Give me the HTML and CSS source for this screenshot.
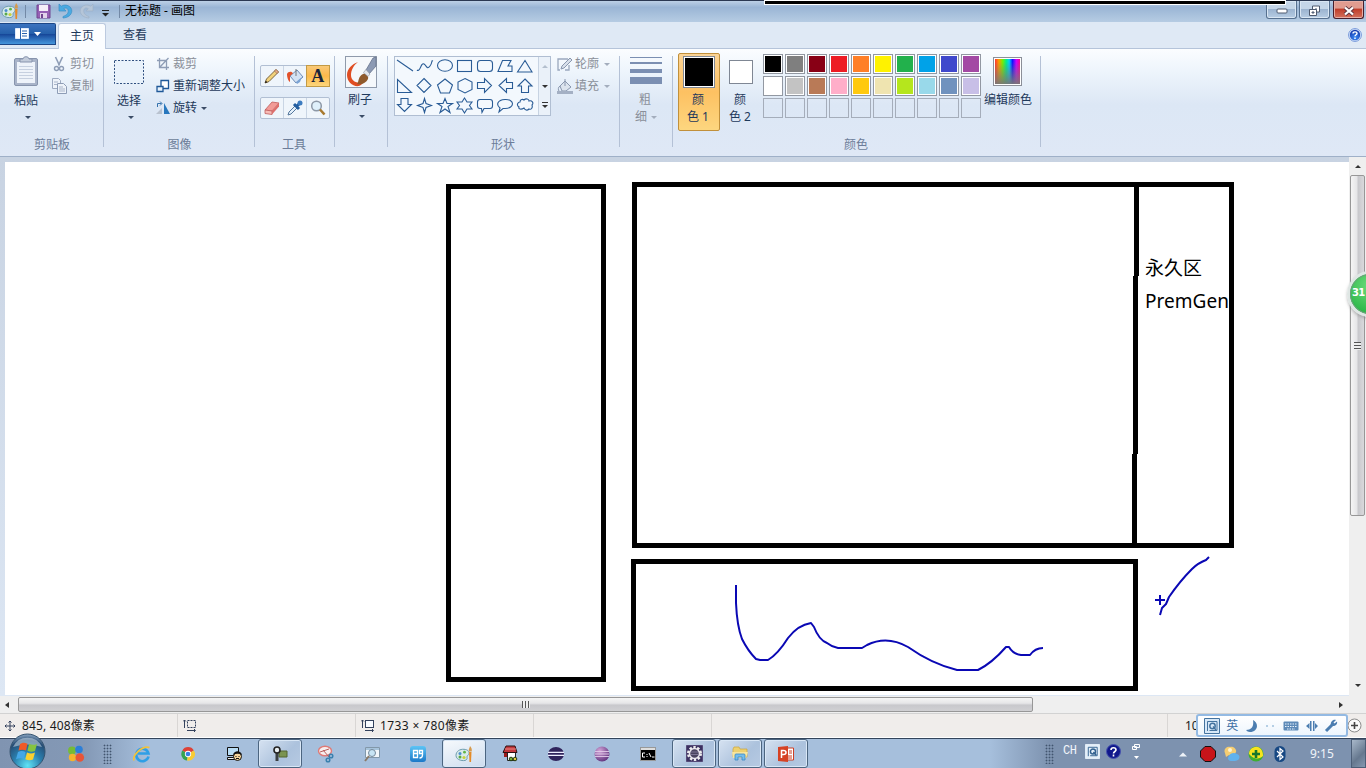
FILE: index.html
```html
<!DOCTYPE html>
<html lang="zh-CN">
<head>
<meta charset="utf-8">
<title>无标题 - 画图</title>
<link rel="stylesheet" href="styles.css">
</head>
<body>
<svg width="0" height="0" class="defs">
  <defs>
    <linearGradient id="blueG" x1="0" y1="0" x2="0" y2="1"><stop offset="0" stop-color="#5cc4f5"/><stop offset="1" stop-color="#1b78c8"/></linearGradient>
    <linearGradient id="rainbow"><stop offset="0" stop-color="#f33"/><stop offset=".15" stop-color="#f90"/><stop offset=".3" stop-color="#7e0"/><stop offset=".45" stop-color="#0e8"/><stop offset=".57" stop-color="#0cf"/><stop offset=".7" stop-color="#11f"/><stop offset=".85" stop-color="#c0f"/><stop offset="1" stop-color="#f08"/></linearGradient>
    <linearGradient id="fadeGray" x1="0" y1="0" x2="0" y2="1"><stop offset=".1" stop-color="#777" stop-opacity="0"/><stop offset="1" stop-color="#777" stop-opacity=".95"/></linearGradient>
    <radialGradient id="orb" cx=".5" cy=".9" r=".9"><stop offset="0" stop-color="#5fe3f5"/><stop offset=".45" stop-color="#2a7fae"/><stop offset=".8" stop-color="#274d75"/><stop offset="1" stop-color="#8fa9c4"/></radialGradient>
    <radialGradient id="ecl" cx=".35" cy=".3" r=".8"><stop offset="0" stop-color="#d3a5d8"/><stop offset="1" stop-color="#5a2b78"/></radialGradient>
    <radialGradient id="help" cx=".5" cy=".75" r=".7"><stop offset="0" stop-color="#3d8cf5"/><stop offset="1" stop-color="#1339ad"/></radialGradient>
    <symbol id="palette" viewBox="0 0 18 18">
      <path d="M1 10.500C1 6 5 4 9 4.300c3.500.2 5.500 2 5 4.200-.4 1.800-2 2-2 3.300s.5 2.200-1 3.200C9 16.400 1 15.500 1 10.500z" fill="#d9ebe9" stroke="#6d9cae"/>
      <circle cx="5" cy="8.500" r="1.500" fill="#4d8fd0"/><circle cx="9.500" cy="7.200" r="1.400" fill="#5fb446"/><circle cx="5" cy="12" r="1.500" fill="#58a848"/><circle cx="9" cy="12.500" r="1.600" fill="#c7d23c"/>
      <path d="M14 7h2.500l-.5 10h-1.500z" fill="#e58b27"/><path d="M13.700 6.500C13.500 4 14.700 3 15 1c1.500 1.500 2.200 3.500 1.700 5.500z" fill="#d69a4c"/>
    </symbol>
  </defs>
</svg>

<div class="window">
  <header class="titlebar">
    <svg class="app-ico" width="18" height="18"><use href="#palette"/></svg>
    <i class="tsep"></i>
    <svg class="save" width="15" height="15" viewBox="0 0 15 15"><path d="M1 1h13v13H1z" fill="#9560b4" stroke="#70458f"/><path d="M3 1h9v6H3z" fill="#f4eef8"/><path d="M4 9h7v5H4z" fill="#e2d4ea"/><path d="M5 10h2v4H5z" fill="#70458f"/></svg>
    <svg class="undo" width="15" height="16" viewBox="0 0 15 16"><path d="M1 1v7h7L5.700 5.700C8 4 10.500 5.500 10.300 8.500 10 11 8 12.500 5 13.500v1.500c5-.3 8.500-3 8.800-6.800C14 3.500 8 .2 3.300 3.200z" fill="#4aaae2" stroke="#3b8fc6" stroke-width=".7"/></svg>
    <svg class="redo" width="15" height="16" viewBox="0 0 15 16"><path d="M14 1v7H7l2.300-2.300C7 4 4.500 5.500 4.700 8.500 5 11 7 12.500 10 13.500v1.500C5 14.700 1.500 12 1.200 8.200 1 3.500 7 .2 11.700 3.200z" fill="#b5c5d8" stroke="#9fb1c7" stroke-width=".7"/></svg>
    <svg class="qat" width="7" height="7" viewBox="0 0 7 7"><path d="M0 .5h7" stroke="#222"/><path d="M0 3h7L3.500 6.500z" fill="#222"/></svg>
    <i class="tsep t2"></i>
    <h1 class="title">无标题 - 画图</h1>
    <div class="winbtns">
      <span class="wb"><svg width="12" height="6" viewBox="0 0 12 6"><rect x="1" y="1" width="10" height="4" rx="1" fill="#fff" stroke="#4f5b70"/></svg></span>
      <span class="wb"><svg width="13" height="12" viewBox="0 0 13 12"><path d="M4.500 1h7v6h-7z" fill="#fff" stroke="#4f5b70"/><path d="M7 3.500h2v1H7z" fill="#4f5b70"/><path d="M1.500 4.500h7v6h-7z" fill="#fff" stroke="#4f5b70"/><path d="M4 7h2v1H4z" fill="#9db4cf" stroke="#4f5b70"/></svg></span>
      <span class="wb close"><svg width="12" height="10" viewBox="0 0 12 10"><path d="M2 1.500l8 7M10 1.500l-8 7" stroke="#5d3640" stroke-width="4"/><path d="M2 1.500l8 7M10 1.500l-8 7" stroke="#fff" stroke-width="2.300"/></svg></span>
    </div>
    <div class="screenbar"></div>
  </header>

  <nav class="tabs">
    <button class="file"><svg width="27" height="12" viewBox="0 0 27 12"><path d="M.5.500h13v10H.5z" fill="#fff" stroke="#dfeafc"/><path d="M5.500 0v11M7 3h5M7 5.500h5M7 8h5" stroke="#2a62b0"/><path d="M19 4h7l-3.500 4z" fill="#fff"/></svg></button>
    <span class="tab on">主页</span><span class="tab">查看</span>
    <svg class="help" width="14" height="14" viewBox="0 0 14 14"><circle cx="7" cy="7" r="6.400" fill="#dceaff" stroke="#7496d8"/><circle cx="7" cy="7" r="5.200" fill="url(#help)"/><path d="M5 5.500C5 3.300 9 3.300 9 5.500 9 6.700 7 6.800 7 8.300M7 9.500v1.500" fill="none" stroke="#fff" stroke-width="1.400"/></svg>
  </nav>

  <section class="ribbon">
    <div class="group g-clip">
      <div class="body">
        <div class="big paste"><svg width="27" height="32" viewBox="0 0 27 32"><rect x="1.500" y="2.500" width="23" height="27" rx="1.500" fill="#a9b4c9" stroke="#8794ad"/><path d="M4 6h18v21H4z" fill="#eef3fa"/><path d="M6 10.500h14M6 13.500h14M6 16.500h14M6 19.500h14M6 22.500h14" stroke="#c6d0e0"/><path d="M7 6V3h3c0-3 6-3 6 0h3v3z" fill="#c3ccdb" stroke="#8794ad"/></svg><span>粘贴</span><i class="arr"></i></div>
        <div class="rows">
          <div class="row dim"><svg width="16" height="16" viewBox="0 0 16 16"><path d="M4.500 1l4 8.500M11.500 1l-4 8.500" stroke="#8e9db6" stroke-width="1.600"/><circle cx="5.500" cy="12.500" r="2" fill="none" stroke="#8e9db6" stroke-width="1.400"/><circle cx="10.500" cy="12.500" r="2" fill="none" stroke="#8e9db6" stroke-width="1.400"/></svg><span>剪切</span></div>
          <div class="row dim"><svg width="16" height="16" viewBox="0 0 16 16"><path d="M1.500.500h6l2 2v8h-8z" fill="#eef3fa" stroke="#9eabc1"/><path d="M6.500 5.500h6l3 3v7h-9z" fill="#eef3fa" stroke="#8e9db6"/><path d="M3 4h4M3 6.500h3M8 9h4M8 11h6M8 13h6" stroke="#a9b5c9"/></svg><span>复制</span></div>
        </div>
      </div>
      <div class="label">剪贴板</div>
    </div>

    <div class="group g-image">
      <div class="body">
        <div class="big select"><svg width="31" height="32" viewBox="0 0 31 32"><rect x=".5" y="4.500" width="29" height="23" fill="#e9f2fb" stroke="#2f4f7f" stroke-dasharray="2 1.500"/></svg><span>选择</span><i class="arr"></i></div>
        <div class="rows">
          <div class="row dim"><svg width="14" height="14" viewBox="0 0 14 14"><path d="M1 3.500h9.500V13M3.500 1v9.500H13M3.500 10.500L12.500 1" fill="none" stroke="#8e9db6" stroke-width="1.300"/></svg><span>裁剪</span></div>
          <div class="row"><svg width="14" height="14" viewBox="0 0 14 14"><path d="M5 1.500h7.500v8H5z" fill="#fff" stroke="#1f5898" stroke-width="1.300"/><path d="M1 7.500h6v5H1z" fill="#e8f3fd" stroke="#1f5898" stroke-width="1.300"/></svg><span>重新调整大小</span></div>
          <div class="row"><svg width="14" height="14" viewBox="0 0 14 14"><path d="M0 13h6V7z" fill="#b9c2cf"/><path d="M8 13h6L8 2z" fill="#2877bd"/><path d="M1.500 6V2.500h4M4 .5l2 2-2 2" fill="none" stroke="#3572ad"/></svg><span>旋转</span><i class="arr"></i></div>
        </div>
      </div>
      <div class="label">图像</div>
    </div>

    <div class="group g-tools">
      <div class="body">
        <div class="toolrow">
          <span><svg width="16" height="16" viewBox="0 0 16 16"><path d="M1 15l1.500-4L12 1.500l2.500 2.500L5 13.500z" fill="#f2d27a" stroke="#7a6540"/><path d="M12 1.500l2.500 2.500-1.500 1.500L10.500 3z" fill="#ecaf89" stroke="#8c5e4b" stroke-width=".6"/><path d="M1 15l.8-2.300 1.700 1.600z" fill="#111"/></svg></span>
          <span><svg width="18" height="17" viewBox="0 0 18 17"><path d="M4 8l7-6 6 7-7 6z" fill="#d3e2f4" stroke="#6d8cb6"/><path d="M10 1v7" stroke="#777"/><path d="M1 6c1-3 5-3 6-.8L4 8v6c-2-1-3-5-3-8z" fill="#e2512b"/><path d="M10 14l6-5-2 5-3 2z" fill="#7ba3d4"/></svg></span>
          <span class="on">A</span>
        </div>
        <div class="toolrow">
          <span><svg width="16" height="14" viewBox="0 0 16 14"><path d="M1 9l7-8 7 1-7 8z" fill="#f29b97" stroke="#c05d5d" stroke-width=".8"/><path d="M1 9l7 1v3.500l-7-1z" fill="#f7bbb5" stroke="#c05d5d" stroke-width=".8"/><path d="M8 10l7-8v3.500l-7 8z" fill="#dc6f6c"/></svg></span>
          <span><svg width="16" height="16" viewBox="0 0 16 16"><path d="M1 15l1-3 6-6 2 2-6 6z" fill="#e4f0fb" stroke="#55779c"/><path d="M7 4l5 5M9.500 6.500l4-4" stroke="#225d9f" stroke-width="3"/><circle cx="13" cy="3" r="2.500" fill="#3d7cc0"/></svg></span>
          <span><svg width="16" height="16" viewBox="0 0 16 16"><circle cx="6.500" cy="6" r="4.800" fill="#dff0fb" stroke="#8d98a7" stroke-width="1.500"/><path d="M10 9.500l4.500 5" stroke="#a8792e" stroke-width="2.600"/></svg></span>
        </div>
      </div>
      <div class="label">工具</div>
    </div>

    <div class="group g-brush">
      <div class="body">
        <div class="big"><svg width="32" height="32" viewBox="0 0 32 32"><rect x=".5" y=".5" width="31" height="31" fill="#f5f8fb" stroke="#8f9aab"/><path d="M13 6C7 8 2 13 2 19c0 7 6 12 12 11 3-1 4-3 3-4-5 2-11-1-11-7 0-5 3-10 7-13z" fill="#df4d22"/><path d="M12 28c2-2 1-8 6-10 3-1 6 2 5 5-2 4-6 6-11 5z" fill="#8f5a2c"/><path d="M21 14l7-12 3-1v9l-7 8z" fill="#8c9ab4" stroke="#65718b" stroke-width=".8"/><path d="M18.500 16.500l2.500-3 4 4.500-2 2.500z" fill="#e3e6ec" stroke="#8a8f99" stroke-width=".6"/></svg><span>刷子</span><i class="arr"></i></div>
      </div>
    </div>

    <div class="group g-shapes">
      <div class="body">
        <div class="gallery">
          <svg width="143" height="58" viewBox="395 57 143 58" fill="none" stroke="#2a5c96" stroke-width="1.100">
            <path d="M397 60l16 11M417 70c3 3 4-8 7-6s3 6 6 2 1-6 3-5"/>
            <ellipse cx="445" cy="65.500" rx="7.500" ry="5.800"/><rect x="457.500" y="60.500" width="14" height="11"/><rect x="477.500" y="60.500" width="15" height="11" rx="3"/>
            <path d="M502.500 60.500h8.500l-3 5.500h4v5.500h-14zM525 60.500l7 11.500h-14.500zM397.500 79.500v13h14zM424 78.500l7 7-7 7-7-7zM445 79l7.500 6-3 8h-9l-3-8zM465 78.500l7 3.500v7.500l-7 3.500-7-3.500v-7.500zM477.500 82.500h7v-4l7 7-7 7v-4h-7zM512.500 82.500h-6v-4l-7.500 7 7.500 7v-4h6zM525 79l7 7h-3.500v6.500h-7V86H518zM401 98.500h7v6h3.500l-7 7-7-7h3.500zM424.500 98.500l1.500 5 5.500 2-5.500 2-1.500 5-1.500-5-5.500-2 5.500-2zM445 98.500l2 5h5.500l-4.500 3 2 6-5-3.500-5 3.500 2-6-4.500-3h5.500zM464.500 98l2.500 4h5l-2.500 3.500 2.500 3.500h-5l-2.500 4-2.500-4h-5l2.500-3.500-2.500-3.500h5z"/>
            <path d="M480 99.500h10q2.500 0 2.500 2.500v4q0 2.500-2.500 2.500h-6l-2 4-.5-4H480q-2.500 0-2.500-2.500v-4q0-2.500 2.500-2.500zM500 108c-4-3-3-8 5-8.500 10-.5 10 9 0 9h-2l-4 3.500zM519 107c-3-2-1-5 1-5 0-3 3-3 4-2 2-2 5-1 5 1 3-1 5 2 3 4 1 3-1 5-3 4-2 2-4 1-5-1-3 2-6 1-5-1z"/>
          </svg>
          <div class="gscroll"><i class="up dim"></i><i class="dn"></i><i class="dn more"></i></div>
        </div>
        <div class="rows">
          <div class="row dim"><svg width="16" height="16" viewBox="0 0 16 16"><path d="M11 3H1v11h2M12 9v5H8" fill="none" stroke="#9aa8be" stroke-width="1.300"/><path d="M4 13l1-3 8-8 2 2-8 8z" fill="#d8e0eb" stroke="#8997ae"/></svg><span>轮廓</span><i class="arr"></i></div>
          <div class="row dim"><svg width="16" height="16" viewBox="0 0 16 16"><path d="M3 8l5-5 6 6-5 4H5z" fill="#dce4ee" stroke="#8997ae"/><path d="M8 1v7M3 8c-2 1-2 4-1 5" fill="none" stroke="#8997ae"/><path d="M0 13h16v3H0z" fill="#a4b0c4"/></svg><span>填充</span><i class="arr"></i></div>
        </div>
      </div>
      <div class="label">形状</div>
    </div>

    <div class="group g-size">
      <div class="body">
        <div class="big dim"><svg width="32" height="32" viewBox="0 0 32 32" fill="#7b8fb2"><path d="M0 1h32v1H0zM0 6h32v2H0zM0 13h32v4H0zM0 21h32v7H0z"/></svg><span>粗</span><span class="l2">细 <i class="arr"></i></span></div>
      </div>
    </div>

    <div class="group g-colors">
      <div class="body">
        <div class="cbtn on"><i class="sw s1"></i><span>颜</span><span>色 1</span></div>
        <div class="cbtn"><i class="sw s2"></i><span>颜</span><span>色 2</span></div>
        <div class="palette">
          <i class="c k1"></i><i class="c k2"></i><i class="c k3"></i><i class="c k4"></i><i class="c k5"></i><i class="c k6"></i><i class="c k7"></i><i class="c k8"></i><i class="c k9"></i><i class="c k10"></i>
          <i class="c k11"></i><i class="c k12"></i><i class="c k13"></i><i class="c k14"></i><i class="c k15"></i><i class="c k16"></i><i class="c k17"></i><i class="c k18"></i><i class="c k19"></i><i class="c k20"></i>
          <i class="c e"></i><i class="c e"></i><i class="c e"></i><i class="c e"></i><i class="c e"></i><i class="c e"></i><i class="c e"></i><i class="c e"></i><i class="c e"></i><i class="c e"></i>
        </div>
        <div class="big edit"><svg width="30" height="32" viewBox="0 0 30 32"><rect x=".5" y="1.500" width="28" height="28" fill="#fff" stroke="#8b8f98"/><path d="M2 3h25v25H2z" fill="url(#rainbow)"/><path d="M2 3h25v25H2z" fill="url(#fadeGray)"/></svg><span>编辑颜色</span></div>
      </div>
      <div class="label">颜色</div>
    </div>
  </section>

  <main class="work">
    <div class="desk">
      <svg class="canvas" width="1344" height="533" viewBox="5 162 1344 533">
        <g fill="none" stroke="#000" stroke-width="5">
          <rect x="448.500" y="186.500" width="155" height="493"/>
          <rect x="634.500" y="184.500" width="597" height="361"/>
          <rect x="633.500" y="561.500" width="502" height="127"/>
          <path d="M1136.500 184v92M1135.500 276v178M1134.500 454v92"/>
        </g>
        <text x="1145" y="275" textLength="57" class="ink">永久区</text>
        <text x="1145" y="308" textLength="84" class="ink">PremGen</text>
        <g fill="none" stroke="#0a08b4" stroke-width="2" stroke-linejoin="round">
          <path d="M736 585V603Q737 626 742 639 748 651 756 659L760 660H768Q778 654 788 638 798 625 811 623L814 627Q819 640 827 643 832 647 838 648H862L867 645Q887 635 908 647 932 664 957 670H978Q992 663 1006 647L1009 647Q1013 654 1021 655H1030Q1035 648 1043 648"/>
          <path d="M1209 557L1206 560Q1198 563 1192 569 1180 581 1169 597L1166 604 1162 608 1160 615M1155 600h10M1160 595v10"/>
        </g>
      </svg>
    </div>
    <div class="vscroll"><i class="up"></i><div class="vthumb"><b></b></div><i class="dn"></i></div>
    <div class="ball">31</div>
  </main>
  <div class="hscroll"><i class="lt"></i><div class="hthumb"><b></b></div><i class="rt"></i></div>

  <footer class="status">
    <div class="cell c1"><svg width="12" height="12" viewBox="0 0 12 12"><path d="M6 1v10M1 6h10M4.500 2.500L6 1l1.500 1.500M4.500 9.500L6 11l1.500-1.500M2.500 4.500L1 6l1.500 1.500M9.500 4.500L11 6 9.500 7.500" fill="none" stroke="#33415c"/></svg><span class="pos">845, 408像素</span></div>
    <div class="cell"><svg width="14" height="13" viewBox="0 0 14 13"><rect x="4.500" y="1.500" width="8" height="7" fill="none" stroke="#33415c" stroke-dasharray="2 1"/><path d="M1.500 1v8M0 2.500L1.500 1 3 2.500M4 11.500h8M11 10l1.500 1.500L11 13" fill="none" stroke="#33415c"/></svg></div>
    <div class="cell"><svg width="14" height="13" viewBox="0 0 14 13"><rect x="4.500" y="1.500" width="8" height="7" fill="#f8fbff" stroke="#33415c"/><path d="M1.500 1v8M0 2.500L1.500 1 3 2.500M4 11.500h8M11 10l1.500 1.500L11 13" fill="none" stroke="#33415c"/></svg><span class="dims">1733 × 780像素</span></div>
    <div class="cell"></div><div class="cell wide"></div>
    <div class="zoom"><span>100%</span><svg width="15" height="15" viewBox="0 0 15 15"><circle cx="7.500" cy="7.500" r="6.500" fill="#fafafa" stroke="#8b8b8b"/><path d="M7.500 4v7M4 7.500h7" stroke="#444" stroke-width="1.600"/></svg></div>
    <div class="ime">
      <svg width="16" height="16" viewBox="0 0 16 16" fill="none" stroke="#44739f"><path d="M.5.500h15v15H.5z" fill="#d7e8f8"/><path d="M3.500 13V3.500H13v9H5.500"/><circle cx="8.500" cy="8" r="2.700" stroke-width="1.500"/><path d="M9 8.500l3 3.500" stroke-width="1.500"/></svg>
      <span>英</span>
      <svg width="14" height="14" viewBox="0 0 14 14"><path d="M8 1c7 4 4 12-3 12-2 0-3-1-4-2 6 0 8-4 7-10z" fill="#4b7db0"/></svg>
      <svg width="12" height="4" viewBox="0 0 12 4"><circle cx="2" cy="2" r="1" fill="#9fc0dd"/><circle cx="8" cy="2" r="1" fill="#9fc0dd"/></svg>
      <svg width="16" height="12" viewBox="0 0 16 12"><rect x=".5" y="1.500" width="15" height="9" rx="1" fill="#5d8ab8"/><path d="M2 4h12M2 6.500h12M4 9h8" stroke="#e9f3fc" stroke-dasharray="1.500 1"/></svg>
      <svg width="12" height="12" viewBox="0 0 12 12" fill="#4b7db0"><path d="M4 1h1.500v10H4zM7 1h1.500v10H7zM3.500 3v6L0 6zM9 3v6l3-3z"/></svg>
      <svg width="14" height="14" viewBox="0 0 14 14"><path d="M2 12l6-6" stroke="#4b7db0" stroke-width="3"/><path d="M12 1L9.500 3.500l1 1L13 2.500C14 6 10 8 7 6.500 6 3 9 0 12 1z" fill="#4b7db0"/></svg>
    </div>
  </footer>

  <div class="taskbar">
    <div class="start"><svg width="37" height="37" viewBox="0 0 37 37"><circle cx="18.500" cy="18.500" r="17.500" fill="url(#orb)" stroke="#34536f"/><path d="M4 14a16 16 0 0 1 29 0Q18 9 4 14z" fill="#dbe8f2" opacity=".5"/><path d="M11 11c3-2 5-1.500 7.500-.3L17 17.500c-2.500-1-4.500-1.200-7.500 0z" fill="#ef5a28"/><path d="M20 11c3 1 5 1.200 8 0l-2 7c-3 1-5 .8-7.500-.3z" fill="#86c440"/><path d="M9 19c3-1.500 5-1 7.500 0L15 26c-2.500-1.200-5-1-8 .3z" fill="#45a7e6"/><path d="M18 19.500c3 1.200 5 1.200 8 0l-2 7c-3 1.200-5 .8-7.700-.3z" fill="#fbd02f"/></svg></div>
    <div class="tb pin"><svg width="18" height="18" viewBox="0 0 18 18"><circle cx="5" cy="5.500" r="3.900" fill="#76bb36"/><circle cx="12" cy="4.500" r="3.800" fill="#2c7fd8"/><circle cx="5.500" cy="12.500" r="3.700" fill="#f5b42c"/><circle cx="12.800" cy="12.500" r="4.300" fill="#e85438"/></svg></div>
    <i class="grip"></i>
    <div class="tasks">
      <div class="tb"><svg width="18" height="18" viewBox="0 0 18 18"><path d="M15.500 11.500A6.200 6.200 0 1 1 15.500 8.500H5" fill="none" stroke="#2f9fe6" stroke-width="2.600"/><path d="M1 15.500C-1 10 10 0 16.500 2.500" fill="none" stroke="#f2c23b" stroke-width="1.700"/></svg></div>
      <div class="tb"><svg width="14" height="14" viewBox="0 0 16 16"><path d="M8 8L1.500 4A7.500 7.500 0 0 1 14.700 4z" fill="#dd4237"/><path d="M8 8L1.500 4A7.500 7.500 0 0 0 7 15.500z" fill="#35a350"/><path d="M8 8l6.700-4A7.500 7.500 0 0 1 7 15.500z" fill="#f7cb35"/><circle cx="8" cy="8" r="3.600" fill="#fff"/><circle cx="8" cy="8" r="2.700" fill="#397fe2"/></svg></div>
      <div class="tb"><svg width="17" height="16" viewBox="0 0 17 16"><path d="M1.500 1.500h11v8h-11z" fill="#b8dcf5" stroke="#111"/><path d="M1.500 11.500h7v2h-7z" fill="#eee" stroke="#111"/><circle cx="11.500" cy="10.500" r="4" fill="#f6d49a" stroke="#111"/><path d="M7 9c1-5 8-5 9 0l-3-1.200-3 0z" fill="#111"/><path d="M10 10v1M13 10v1M10 12.500h3" stroke="#111"/></svg></div>
      <div class="tb run"><svg width="18" height="16" viewBox="0 0 18 16"><path d="M8 5h8v6H8z" fill="#7a9350" stroke="#53652f"/><path d="M4.500 6h3v9h-3z" fill="#3b3f42"/><circle cx="6" cy="4" r="3" fill="#e8eef1" stroke="#222" stroke-width="1.600"/></svg></div>
      <div class="tb"><svg width="18" height="18" viewBox="0 0 18 18"><ellipse cx="8" cy="6" rx="6.500" ry="4.700" fill="#f8eeee" stroke="#df7a76" stroke-width="1.400"/><path d="M3 7l9-3M6 5l6 7" stroke="#b9605e"/><circle cx="14" cy="11" r="1.800" fill="none" stroke="#3980ae" stroke-width="1.500"/><circle cx="11" cy="15" r="1.800" fill="none" stroke="#3980ae" stroke-width="1.500"/></svg></div>
      <div class="tb"><svg width="18" height="18" viewBox="0 0 18 18"><path d="M2.500 2.500h14v10h-14z" fill="#f1f6fa" stroke="#8298aa"/><path d="M3 3h13v2H3z" fill="#a7c4dc"/><circle cx="9" cy="8" r="3.500" fill="#c7e4f4" stroke="#75899a"/><path d="M6 11l-4 5" stroke="#8a7a68" stroke-width="2"/></svg></div>
      <div class="tb"><svg width="16" height="16" viewBox="0 0 16 16"><rect width="16" height="16" rx="3" fill="url(#blueG)"/><path d="M3.500 4.500h4v3h-4zM3.500 7.500h4v4h-4zM9.500 4.500h3v3h-3zM12.500 4v5q0 3-3 3" fill="none" stroke="#fff" stroke-width="1.300"/></svg></div>
      <div class="tb run cur"><svg width="18" height="18"><use href="#palette"/></svg></div>
      <div class="tb"><svg width="16" height="17" viewBox="0 0 16 17"><path d="M5.500 7.500h8v8h-8z" fill="#fff" stroke="#222"/><path d="M4 1h9l2 6.500H1z" fill="#c4383d" stroke="#2a1111"/><path d="M3 4h11" stroke="#e98a86"/><path d="M2 8h3v4H2z" fill="#9b1b1b"/><circle cx="9" cy="14" r="1.800" fill="#70ad34" stroke="#243b13"/><circle cx="13" cy="14" r="1.800" fill="#e3c93a" stroke="#243b13"/></svg></div>
      <div class="tb"><svg width="18" height="16" viewBox="0 0 18 16"><ellipse cx="9" cy="8" rx="8" ry="7" fill="#30245c"/><path d="M1 6.300h16M1 9.300h16" stroke="#eef" stroke-width="1.300"/></svg></div>
      <div class="tb"><svg width="18" height="16" viewBox="0 0 18 16"><circle cx="9" cy="8" r="7.500" fill="url(#ecl)"/><path d="M2 5.500h14M2 8h14M2 10.500h14" stroke="#e2cbe9" stroke-width=".9"/></svg></div>
      <div class="tb"><svg width="16" height="14" viewBox="0 0 16 14"><path d="M.5.500h15v13H.5z" fill="#000" stroke="#999"/><path d="M1 1h14v2H1z" fill="#ddd"/><path d="M5 6H2.500v4H5M7 7v1M7 9v1M9 6l2 4M12 10h2.500" fill="none" stroke="#fff"/></svg></div>
      <div class="tb run"><svg width="17" height="17" viewBox="0 0 17 17"><path d="M.5.500h16v16H.5z" fill="#3b3060" stroke="#554a78"/><circle cx="8.500" cy="8.500" r="6" fill="none" stroke="#eee" stroke-width="3" stroke-dasharray="2.300 1.470"/><circle cx="8.500" cy="8.500" r="5" fill="#4a4460" stroke="#e9e6ee" stroke-width="1.500"/><path d="M5 7h7M5 9.500h7" stroke="#7d7594"/></svg></div>
      <div class="tb run"><svg width="18" height="16" viewBox="0 0 18 16"><path d="M2 3l1-2h5l1 2h7v8H2z" fill="#edd170" stroke="#cba43a" stroke-width=".7"/><path d="M1 6h16l-2 6H2z" fill="#f8e59e"/><path d="M4 14V9q0-1 1-1h8q1 0 1 1v5h-3v-3H7v3z" fill="#75bdec" stroke="#3988c5" stroke-width=".8"/></svg></div>
      <div class="tb run"><svg width="16" height="16" viewBox="0 0 16 16"><path d="M7 2h8.500v12H7z" fill="#fff" stroke="#ce3e25"/><path d="M11 5h3M11 7h3M10 10h4M10 12h4" stroke="#ce3e25"/><path d="M0 1l10-1v16L0 15z" fill="#d64224"/><path d="M3.500 12V4.500h2q2.500 0 2.500 2t-2.500 2h-2" fill="none" stroke="#fff" stroke-width="1.500"/></svg></div>
    </div>
    <i class="grip g2"></i>
    <div class="tray">
      <span class="ch">CH</span>
      <svg class="q" width="15" height="15" viewBox="0 0 16 16" fill="none" stroke="#31618f"><path d="M.5.500h15v15H.5z" fill="#e4eff9" stroke="#e4eff9"/><path d="M3.500 13V3.500H13v9H5.500"/><circle cx="8.500" cy="8" r="2.700" stroke-width="1.500"/><path d="M9 8.500l3 3.500" stroke-width="1.500"/></svg>
      <svg class="hp" width="15" height="15" viewBox="0 0 15 15"><circle cx="7.500" cy="7.500" r="7" fill="#10188c" stroke="#4653ae"/><path d="M5 6C5 3 10 3 10 6 10 7.500 7.500 7.500 7.500 9.500M7.500 10.500v2" fill="none" stroke="#fff" stroke-width="1.600"/></svg>
      <svg class="rs" width="9" height="18" viewBox="0 0 9 18"><path d="M2.500 1.500h5v3h-5zM.5 3.500h4v3h-4z" fill="#8296b2" stroke="#fff"/><path d="M2 13h5L4.500 16z" fill="#fff"/></svg>
      <svg class="ua" width="8" height="5" viewBox="0 0 8 5"><path d="M0 4.500h8L4 .5z" fill="#eef3f8"/></svg>
      <svg width="16" height="16" viewBox="0 0 16 16"><path d="M5 .5h6L15.500 5v6L11 15.500H5L.5 11V5z" fill="#c8141a" stroke="#111"/></svg>
      <svg width="16" height="16" viewBox="0 0 16 16"><path d="M1 7C-1 3 3 0 6 1c3-1 7 2 6 5s-5 4-7 3l-3 2z" fill="#f4cd72"/><path d="M5 10c1-3 5-4 8-2 4 1 3 7-2 7H7c-3 0-4-3-2-5z" fill="#61b2ed"/><circle cx="6" cy="4" r="2" fill="#fff4d0"/></svg>
      <svg width="16" height="16" viewBox="0 0 16 16"><circle cx="8" cy="8" r="7.500" fill="#3fae31"/><path d="M1 8a7 7 0 0 1 12-5c2 3 2 5 2 7-3 3-9 4-14-2z" fill="#f7e31f"/><path d="M8 4v8M4 8h8" stroke="#16782c" stroke-width="2.600"/></svg>
      <svg width="16" height="16" viewBox="0 0 16 16"><rect x="2.500" y="0" width="11" height="16" rx="5.500" fill="#174883"/><path d="M5 5l6 6-3 2.500v-11L11 5l-6 6" fill="none" stroke="#fff" stroke-width="1.200"/></svg>
      <span class="clock">9:15</span>
      <i class="show"></i>
    </div>
  </div>
</div>
</body>
</html>
```
FILE: styles.css
```css
* { box-sizing: border-box; }
body { margin: 0; overflow: hidden; font: 12px/16px "Noto Sans", "Noto Sans CJK SC", sans-serif; color: #1e395b; }
i { font-style: normal; display: block; flex: none; }
svg { display: block; flex: none; }
.defs { position: absolute; }
.window { width: 1366px; height: 768px; display: flex; flex-direction: column; overflow: hidden; background: #dfe9f5; }

/* title bar */
.titlebar { position: relative; height: 22px; flex: none; display: flex; align-items: center; padding-bottom: 1px; border-top: 1px solid #2b3852; background: linear-gradient(#bdd0e6, #9ab5d5 30%, #b6cce3); }
.app-ico { margin-left: 1px; }
.tsep { width: 1px; height: 13px; background: #7389a6; margin-left: 6px; }
.save { margin-left: 10px; }
.undo { margin-left: 7px; }
.redo { margin-left: 6px; }
.qat { margin: 5px 0 0 8px; }
.tsep.t2 { margin-left: 10px; }
.title { margin: 0 0 0 5px; font-size: 12px; font-weight: 400; color: #000; line-height: 16px; }
.winbtns { margin-left: auto; display: flex; gap: 2px; padding-right: 2px; align-self: flex-start; }
.wb { width: 31px; height: 18px; padding-top: 2px; border: 1px solid #56708f; border-top: 0; border-radius: 0 0 3px 3px; box-shadow: inset 0 0 0 1px #d9e6f3; background: linear-gradient(#c5d6e8 45%, #9cb4d0 50%, #b7cde4); display: flex; align-items: center; justify-content: center; }
.wb.close { border-color: #471e2b; box-shadow: inset 0 0 0 1px #e6ada5; background: linear-gradient(#e09c90 40%, #c03f2c 50%, #d4715c); margin-left: 1px; }
.screenbar { position: absolute; left: 764px; top: -1px; width: 522px; height: 5px; background: #000; border: 1px solid #fff; }

/* tabs */
.tabs { height: 27px; flex: none; display: flex; align-items: flex-start; background: #dfe9f5; border-bottom: 1px solid #b5c4da; }
.file { margin: 1px 2px 0 0; width: 56px; height: 22px; padding: 0 0 0 15px; border: 1px solid #1c4787; border-left: 0; border-radius: 0 2px 0 0; background: linear-gradient(#3b73bf, #2560ab 48%, #17489a 52%, #4596dc); }
.tab { height: 27px; width: 53px; padding-top: 5px; text-align: center; }
.tab.on { width: 48px; margin-top: 1px; height: 26px; padding-top: 4px; background: #fbfdff; border: 1px solid #bccadf; border-bottom: 0; border-radius: 3px 3px 0 0; }
.tab.on + .tab { width: 58px; }
.help { margin: 6px 4px 0 auto; }

/* ribbon */
.ribbon { height: 108px; flex: none; display: flex; border-bottom: 1px solid #9fb0c8; background: linear-gradient(#fbfdff, #eef5fc 20%, #dce7f5 52%, #dfe8f6); }
.group { position: relative; height: 107px; display: flex; flex-direction: column; background: linear-gradient(#b4c1d6, #b4c1d6) right 7px / 1px 91px no-repeat; }
.body { height: 88px; display: flex; padding-top: 7px; }
.label { text-align: center; color: #6c7d99; line-height: 16px; }
.g-tools .label, .g-shapes .label, .g-colors .label { padding-right: 2px; }
.big { display: flex; flex-direction: column; align-items: center; }
.big > span { margin-top: 5px; white-space: nowrap; }
.big > .arr { margin: 7px 0 0 3px; }
.big > .l2 { margin-top: 1px; display: flex; gap: 4px; align-items: center; }
.arr { width: 0; height: 0; border: 3px solid transparent; border-top-color: #3b4c66; border-bottom: 0; }
.dim { color: #8a8f99; }
.dim .arr { border-top-color: #a3adbd; }
.rows { display: flex; flex-direction: column; gap: 6px; }
.row { display: flex; align-items: center; gap: 3px; height: 16px; white-space: nowrap; }
.g-clip { width: 104px; } .g-image { width: 151px; } .g-tools { width: 80px; } .g-brush { width: 53px; } .g-shapes { width: 232px; } .g-size { width: 53px; } .g-colors { width: 368px; }
.g-clip .big { width: 52px; }
.g-clip .rows { margin-left: -1px; }
.g-image .big { width: 50px; }
.g-image .rows { margin-left: 2px; }
.g-image .row .arr { margin-left: 1px; }
.g-tools .body { flex-direction: column; gap: 10px; padding: 16px 0 0 5px; }
.toolrow { width: 70px; height: 22px; display: flex; border: 1px solid #b1bfd3; border-radius: 2px; background: #eff5fb; }
.toolrow span { flex: 1; display: flex; align-items: center; justify-content: center; border-left: 1px solid #c9d5e4; }
.toolrow span:first-child { border: 0; }
.toolrow .on { margin: -1px; border: 1px solid #c29a45; background: linear-gradient(#f9c978, #fbb94a 50%, #fdd67c); font: bold 18px/20px "Liberation Serif", serif; color: #17233b; }
.g-brush .big { width: 52px; }
.g-brush .big > span { margin: 4px 2px 0 0; }
.g-brush .big > .arr { margin-left: 2px; }
.g-shapes .body { padding-left: 6px; }
.gallery { width: 157px; height: 60px; display: flex; border: 1px solid #b0bed2; background: #f3f8fd; }
.gscroll { width: 12px; display: flex; flex-direction: column; align-items: center; border-left: 1px solid #c7d3e2; padding-top: 8px; gap: 17px; background: #eaf1f9; }
.up, .dn, .lt, .rt { width: 0; height: 0; border: 3px solid transparent; }
.up { border-bottom: 3px solid #333; border-top: 0; }
.dn { border-top: 3px solid #333; border-bottom: 0; }
.up.dim { border-bottom-color: #b3bfce; }
.dn.more { position: relative; }
.dn.more::before { content: ""; position: absolute; left: -3px; top: -6px; width: 6px; height: 1px; background: #333; }
.g-shapes .rows { margin-left: 6px; }
.g-shapes .row { gap: 2px; }
.g-shapes .row .arr { margin-left: 3px; }
.g-size .big { width: 52px; }
.g-size .big > span { margin: 4px 2px 0 0; }
.g-size .big > .l2 { margin: 1px 0 0; }
.g-colors .body { padding: 4px 0 0 5px; }
.cbtn { width: 42px; height: 78px; display: flex; flex-direction: column; align-items: center; color: #1e395b; }
.cbtn.on { border: 1px solid #c1903b; border-radius: 2px; background: linear-gradient(#fbd496, #fdc162 50%, #fdd67f); }
.cbtn span { line-height: 17px; height: 17px; margin: -1px 2px 1px 0; }
.sw { border: 1px solid #7f8794; }
.s1 { width: 32px; height: 32px; margin: 2px 0 4px; background: #000; box-shadow: inset 0 0 0 1px #fff; }
.s2 { width: 24px; height: 24px; margin: 7px 0 8px; background: #fff; }
.palette { margin: 1px 0 0 1px; display: grid; grid-template-columns: repeat(10, 20px); grid-auto-rows: 20px; gap: 2px; align-content: start; }
.c { border: 1px solid #9298a2; box-shadow: inset 0 0 0 1px #fff; }
.c.e { border-color: #a5adba; box-shadow: none; }
.k1 { background: #000; } .k2 { background: #7f7f7f; } .k3 { background: #880015; } .k4 { background: #ed1c24; } .k5 { background: #ff7f27; }
.k6 { background: #fff200; } .k7 { background: #22b14c; } .k8 { background: #00a2e8; } .k9 { background: #3f48cc; } .k10 { background: #a349a4; }
.k11 { background: #fff; } .k12 { background: #c3c3c3; } .k13 { background: #b97a57; } .k14 { background: #ffaec9; } .k15 { background: #ffc90e; }
.k16 { background: #efe4b0; } .k17 { background: #b5e61d; } .k18 { background: #99d9ea; } .k19 { background: #7092be; } .k20 { background: #c8bfe7; }
.edit { margin: 3px 0 0 3px; }
.edit > span { margin-top: 4px; }

/* drawing area */
.work { position: relative; height: 539px; flex: none; display: flex; }
.desk { width: 1349px; padding: 5px 0 0 5px; background: linear-gradient(#c8d3e2, #dde7f4); }
.canvas { background: #fff; }
.ink { font: 19px "Noto Sans", "Noto Sans CJK SC", sans-serif; fill: #000; }
.vscroll { width: 17px; background: #efefef; display: flex; flex-direction: column; align-items: center; padding-top: 8px; }
.vthumb { width: 15px; height: 341px; margin: 7px 0 168px; border: 1px solid #979797; border-radius: 2px; background: linear-gradient(90deg, #f5f5f5, #e6e6e8 45%, #c8c8cc 55%, #d9d9dc); display: flex; align-items: center; justify-content: center; }
.vthumb b { width: 7px; height: 8px; background: repeating-linear-gradient(#555 0 1px, #eee 1px 3px); }
.ball { position: absolute; left: 1347px; top: 114px; width: 46px; height: 46px; border-radius: 50%; border: 3px solid #dfe6e4; outline: 1px solid #6f9b7e; outline-offset: -4px; background: radial-gradient(circle at 50% 30%, #6edb7c, #2fb94b 75%); color: #fff; font: bold 10px/38px "DejaVu Sans", sans-serif; letter-spacing: -0.7px; padding-left: 2px; box-shadow: 0 2px 3px #8888; }
.hscroll { height: 17px; flex: none; background: #efefef; display: flex; align-items: center; padding-left: 5px; }
.lt { border-right: 4px solid #333; border-left: 0; }
.rt { border-left: 4px solid #333; border-right: 0; margin-left: 306px; }
.hthumb { width: 1015px; height: 15px; margin-left: 9px; border: 1px solid #979797; border-radius: 2px; background: linear-gradient(#f5f5f5, #e6e6e8 40%, #c8c8cc 55%, #d0d0d3); display: flex; align-items: center; justify-content: center; }
.hthumb b { width: 8px; height: 7px; background: repeating-linear-gradient(90deg, #555 0 1px, #eee 1px 3px); }

/* status bar */
.status { position: relative; height: 25px; flex: none; display: flex; background: #f0edeb; border-top: 1px solid #d2d2d2; border-bottom: 1px solid #fff; color: #1a1a1a; }
.cell { width: 178px; display: flex; align-items: center; gap: 5px; padding-left: 5px; border-right: 1px solid #d9d6d4; white-space: nowrap; }
.cell.c1 { padding-left: 4px; gap: 6px; }
.pos { letter-spacing: .15px; }
.dims { letter-spacing: .38px; }
.cell.wide { width: 456px; }
.zoom { flex: 1; display: flex; align-items: center; justify-content: space-between; padding: 0 4px 0 17px; }
.ime { position: absolute; left: 1196px; top: 0; width: 152px; height: 23px; display: flex; align-items: center; justify-content: space-between; padding: 0 8px 0 6px; border: 2px solid #94bae3; border-radius: 3px; background: linear-gradient(#fff, #edf5fd); color: #3f70a4; }

/* taskbar */
.taskbar { height: 30px; flex: none; display: flex; align-items: center; border-top: 1px solid #33445b; background: linear-gradient(90deg, #8094b1, #8499b6 85px, #a6bfdc 150px, #a6bfdc 990px, #7d92af 1050px, #7d92af); }
.start { width: 54px; display: flex; justify-content: flex-end; padding-right: 8px; position: relative; top: -2px; }
.tb { width: 46px; height: 29px; display: flex; align-items: center; justify-content: center; }
.tb.pin { width: 44px; }
.tb.run { width: 44px; margin: 0 1px; border: 1px solid #4c6580; border-radius: 3px; box-shadow: inset 0 0 0 1px #d9e7f6; background: linear-gradient(135deg, #d6e2f1, #acc2dd 60%, #b7cae2); }
.tb.cur { background: linear-gradient(160deg, #f7fafd, #cddcee); }
.grip { width: 9px; height: 20px; margin: 0 11px 0 5px; background: radial-gradient(circle, #42556f 0 .8px, transparent 1.1px) 0 0 / 3px 3px; }
.tasks { display: flex; margin-left: -4px; }
.grip.g2 { margin: 0 0 0 236px; }
.tray { flex: 1; display: flex; align-items: center; color: #f1f5fa; }
.ch { margin: -5px 0 0 9px; width: 14px; font: 12px/14px "Liberation Mono", monospace; letter-spacing: -.5px; }
.q { margin: -4px 0 0 8px; }
.hp { margin: -4px 0 0 6px; }
.rs { margin: -4px 0 0 11px; }
.ua { margin: 2px 4px 0 38px; }
.ua ~ svg { margin-left: 8px; }
.ua + svg { margin-left: 9px; }
.clock { margin-left: 22px; width: 26px; white-space: nowrap; }
.show { width: 15px; height: 29px; margin-left: auto; border: 1px solid #4c5e77; background: linear-gradient(135deg, #a9b9cb, #66788f 60%, #8598b0); }
```
